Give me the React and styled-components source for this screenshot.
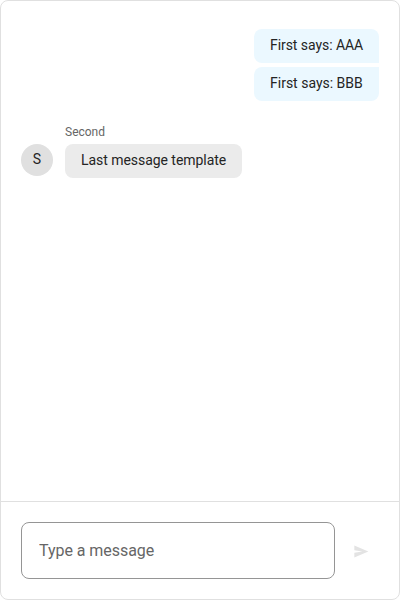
import React from "react";
import styled, { createGlobalStyle } from "styled-components";

const GlobalStyle = createGlobalStyle`
  *, *::before, *::after { box-sizing: border-box; }
  body { margin: 0; background: #fff; }
`;

const Chat = styled.main`
  display: flex;
  flex-direction: column;
  width: 400px;
  height: 600px;
  border: 1px solid #e0e0e0;
  border-radius: 8px;
  overflow: hidden;
  background: #fff;
  color: #242424;
  font-family: Roboto, sans-serif;
  font-size: 14px;
`;

const MessageList = styled.section`
  flex: 1;
  display: flex;
  flex-direction: column;
  padding: 28px 20px;
`;

const OwnGroup = styled.div`
  display: flex;
  flex-direction: column;
  align-self: flex-end;
  width: 125px;
  gap: 4px;
`;

const Bubble = styled.div`
  height: 34px;
  padding: 6px 16px 8px;
  line-height: 20px;
  letter-spacing: ${(p) => p.$tracking || "-0.045px"};
  white-space: nowrap;
  background: ${(p) => (p.$own ? "#ebf8ff" : "#ebebeb")};
  border-radius: ${(p) => p.$corners || "8px"};
`;

const IncomingGroup = styled.div`
  display: flex;
  align-items: flex-end;
  gap: 12px;
  margin-top: 23px;
`;

const Avatar = styled.div`
  display: flex;
  justify-content: center;
  width: 32px;
  height: 32px;
  margin-bottom: 2px;
  line-height: 31px;
  border-radius: 50%;
  background: #e0e0e0;
`;

const Author = styled.div`
  height: 20px;
  font-size: 12px;
  line-height: 16px;
  color: #666;
`;

const Composer = styled.form`
  display: flex;
  align-items: center;
  gap: 10px;
  height: 98px;
  padding: 20px 21px 20px 20px;
  border-top: 1px solid #e0e0e0;
`;

const MessageInput = styled.input`
  width: 314px;
  height: 57px;
  padding: 0 17px;
  border: 1px solid #959595;
  border-radius: 8px;
  outline: none;
  background: #fff;
  font: 16px Roboto, sans-serif;
  letter-spacing: -0.05px;
  &::placeholder { color: #666; opacity: 1; }
`;

const SendButton = styled.button`
  display: grid;
  place-items: center;
  flex: none;
  width: 32px;
  height: 32px;
  padding: 2px 0 0;
  border: 0;
  background: none;
  color: #e3e3e3;
`;

export default function App() {
  return (
    <>
      <GlobalStyle />
      <Chat>
        <MessageList>
          <OwnGroup>
            <Bubble $own $tracking="-0.06px" $corners="8px 8px 0 8px">First says: AAA</Bubble>
            <Bubble $own $tracking="0" $corners="8px 0 8px 8px">First says: BBB</Bubble>
          </OwnGroup>
          <IncomingGroup>
            <Avatar>S</Avatar>
            <div>
              <Author>Second</Author>
              <Bubble>Last message template</Bubble>
            </div>
          </IncomingGroup>
        </MessageList>
        <Composer>
          <MessageInput placeholder="Type a message" aria-label="Message" />
          <SendButton type="button" aria-label="Send" disabled>
            <svg width="16" height="16" viewBox="0 0 24 24" fill="currentColor">
              <path d="M2 2.25 23 11.25 2 20.25V13.25L14 11.25 2 9.25Z" />
            </svg>
          </SendButton>
        </Composer>
      </Chat>
    </>
  );
}
